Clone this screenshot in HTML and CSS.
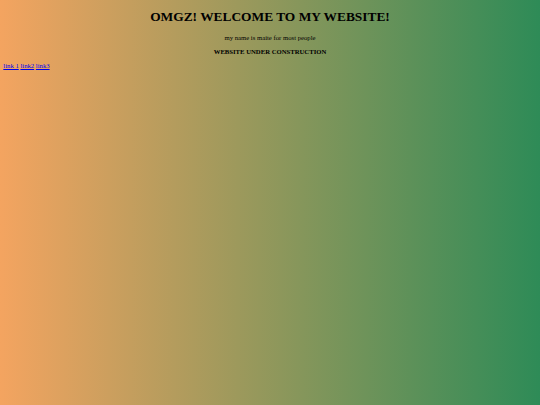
FILE: index.html
```html
<!DOCTYPE html>
<html>
<head>
<meta charset="utf-8">
<title>OMGZ</title>
<link rel="stylesheet" href="styles.css">
</head>
<body class="page">
<h1 class="title">OMGZ! WELCOME TO MY WEBSITE!</h1>
<p class="intro">my name is maite for most people</p>
<p class="notice">WEBSITE UNDER CONSTRUCTION</p>
<p class="links"><a href="#">link 1</a> <a href="#">link2</a> <a href="#">link3</a></p>
</body>
</html>
```
FILE: styles.css
```css
html {
  min-height: 100%;
  background: linear-gradient(to right, #f4a460, #2e8b57);
}
.page {
  margin: 0 3.35px;
  padding-top: 0.1px;
  font-family: "Liberation Serif", "Times New Roman", serif;
  font-size: 6.7px;
  color: #000;
}
.title {
  font-size: 13.4px;
  text-align: center;
  margin: 9px 0 0.67em;
}
.intro {
  text-align: center;
  margin: 1em 0;
}
.notice {
  font-weight: bold;
  text-align: center;
  margin: 1em 0;
}
.links {
  margin: 7.5px 0 1em;
}
.links a {
  color: #0000ee;
}
```
